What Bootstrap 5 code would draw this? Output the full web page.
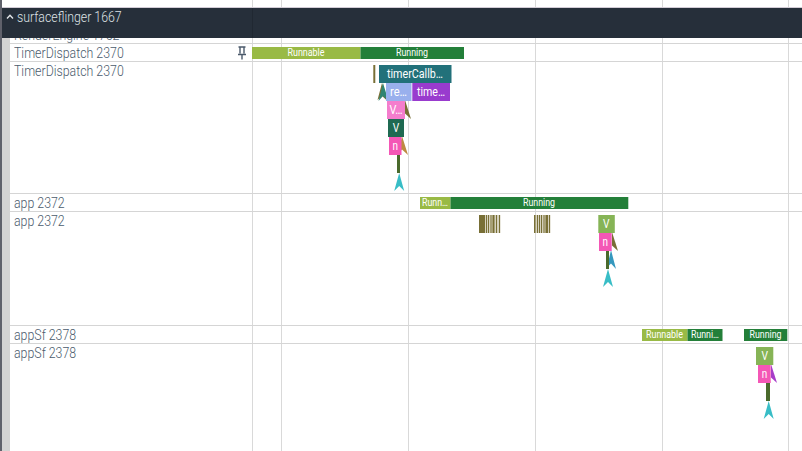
<!DOCTYPE html>
<html lang="en">
<head>
<meta charset="utf-8">
<title>Trace timeline</title>
<link href="https://cdn.jsdelivr.net/npm/bootstrap@5.3.0/dist/css/bootstrap.min.css" rel="stylesheet">
<style>
body{font-family:Roboto,"Liberation Sans",sans-serif;height:451px;background:#fff}
.edge{width:2px;background:#5f616b}
.gutter{width:8px;background:#d3d3d3}
.ruler{height:8px;border-bottom:1px solid #d2ccd6}
.grid{background-image:linear-gradient(#d9d9d9,#d9d9d9),linear-gradient(#d9d9d9,#d9d9d9),linear-gradient(#d9d9d9,#d9d9d9),linear-gradient(#d9d9d9,#d9d9d9),linear-gradient(#d9d9d9,#d9d9d9),linear-gradient(#d9d9d9,#d9d9d9);background-size:1px 100%;background-repeat:no-repeat;background-position:0 0,29px 0,156px 0,283px 0,410px 0,536px 0}
.process{height:30px;background:#262f3a;color:#dfe2e5}
.process-head{width:250px}
.process-name{font-size:15px;font-weight:300;line-height:18px;transform:scaleX(.822);transform-origin:0 50%;margin-left:2.500px}
.divider{width:1px;background:#202832}
.trk{border-bottom:1px solid #d5d5d5}
.h-clip{height:6px}.h-state{height:18px}.h-slices{height:132px}.h-short{height:114px}
.shell{width:242px;padding-left:4px;color:#4a5b6c}
.title{font-size:15px;font-weight:300;line-height:18px;transform:scaleX(.823);transform-origin:0 0}
.h-clip .title{margin-top:-12px}
.pin{margin:2px 5px 0 0}
svg{display:block;flex:none}
svg text{fill:#fff;text-anchor:middle}
.st{font-size:10px}
.sl{font-size:12px}
</style>
<script src="https://cdn.jsdelivr.net/npm/bootstrap@5.3.0/dist/js/bootstrap.bundle.min.js"></script>
</head>
<body class="d-flex overflow-hidden">
<div class="edge flex-shrink-0"></div>
<main class="d-flex flex-column flex-grow-1 overflow-hidden">
  <div class="ruler d-flex flex-shrink-0"><div class="shell"></div><div class="grid flex-grow-1 ms-2"></div></div>
  <header class="process d-flex flex-shrink-0">
    <div class="process-head d-flex align-items-start">
      <svg class="ms-1 mt-1" width="8" height="10" viewBox="0 0 8 10"><path d="M1 6.500 4 3.300 7 6.500" fill="none" stroke="#e2e5e8" stroke-width="1.400"/></svg>
      <span class="process-name text-nowrap">surfaceflinger 1667</span>
    </div>
    <div class="divider"></div>
  </header>
  <div class="d-flex flex-grow-1 overflow-hidden">
    <div class="gutter flex-shrink-0"></div>
    <div class="flex-grow-1 overflow-hidden">
      <div class="trk h-clip d-flex overflow-hidden"><div class="shell"><div class="title text-nowrap">RenderEngine 1752</div></div><div class="grid flex-grow-1"></div></div>

      <div class="trk h-state d-flex">
        <div class="shell d-flex justify-content-between"><div class="title text-nowrap">TimerDispatch 2370</div>
          <svg class="pin" width="10" height="14" viewBox="0 0 10 14"><path d="M1.500 1h7M3 1v6.500M7 1v6.500M1 8.500h8M5 8.500v5" fill="none" stroke="#4b5a6b" stroke-width="1.400"/></svg></div>
        <div class="grid flex-grow-1"><svg class="st" width="550" height="17" viewBox="252 0 550 17">
          <path fill="#99ba45" d="M252 3h108.500v12H252z"/><path fill="#237f39" d="M360.500 3H464v12H360.500z"/>
          <text x="306" y="12" textLength="37" lengthAdjust="spacingAndGlyphs">Runnable</text><text x="412" y="12" textLength="32" lengthAdjust="spacingAndGlyphs">Running</text>
        </svg></div>
      </div>

      <div class="trk h-slices d-flex">
        <div class="shell"><div class="title text-nowrap">TimerDispatch 2370</div></div>
        <div class="grid flex-grow-1"><svg class="sl" width="550" height="131" viewBox="252 0 550 131">
          <path fill="#786f36" d="m382 21 5.500 18-5.500-5-4.500 4z"/><path fill="#2f8471" d="m383 21 5.500 18-5.500-5-4.500 5z"/>
          <path fill="#786f36" d="m405 38 6 19-6-5.500z"/><path fill="#bd8a41" d="m402 74 6 19-6-5.500-4 4z"/>
          <path fill="#786f36" d="M373.300 3h2v18h-2z"/><path fill="#22717a" d="M379 3h72.500v18H379z"/>
          <path fill="#99b0ed" d="M386 21h25.500v18H386z"/><path fill="#993bce" d="M412.300 21H450v18h-37.700z"/>
          <path fill="#f47dcd" d="M387 39h18v18h-18z"/><path fill="#1f6a52" d="M388 57h16v18h-16z"/><path fill="#f457b6" d="M389 75h12.500v18H389z"/>
          <path fill="#4a6a2c" d="M397 93h3v18h-3z"/>
          <path fill="#38bdc6" d="m399.200 111 5 18-5-5-5 5z"/>
          <text x="415" y="16" textLength="56" lengthAdjust="spacingAndGlyphs">timerCallb…</text>
          <text x="398.500" y="34" textLength="17" lengthAdjust="spacingAndGlyphs">re…</text>
          <text x="431" y="34" textLength="28" lengthAdjust="spacingAndGlyphs">time…</text>
          <text x="396" y="52" textLength="13" lengthAdjust="spacingAndGlyphs">V…</text>
          <text x="396" y="70" textLength="6.500" lengthAdjust="spacingAndGlyphs">V</text><text x="395.300" y="88" textLength="5.500" lengthAdjust="spacingAndGlyphs">n</text>
        </svg></div>
      </div>

      <div class="trk h-state d-flex">
        <div class="shell"><div class="title text-nowrap">app 2372</div></div>
        <div class="grid flex-grow-1"><svg class="st" width="550" height="17" viewBox="252 0 550 17">
          <path fill="#99ba45" d="M420 3h30.500v12H420z"/><path fill="#237f39" d="M450.500 3H628.300v12H450.500z"/>
          <text x="435" y="12" textLength="26" lengthAdjust="spacingAndGlyphs">Runn…</text><text x="539" y="12" textLength="32" lengthAdjust="spacingAndGlyphs">Running</text>
        </svg></div>
      </div>

      <div class="trk h-short d-flex">
        <div class="shell"><div class="title text-nowrap">app 2372</div></div>
        <div class="grid flex-grow-1"><svg class="sl" width="550" height="113" viewBox="252 0 550 113">
          <path fill="#d5d1be" d="M479 3h21.500v18H479zM534 3h16.500v18H534z"/>
          <path fill="#786f36" d="M479 3h6v18h-6zM486 3h1v18h-1zM488 3h1v18h-1zM493 3h1v18h-1zM496 3h1v18h-1zM499 3h1v18h-1zM534 3h1.500v18H534zM537 3h1v18h-1zM539 3h1v18h-1zM541 3h1v18h-1zM545.500 3H548v18h-2.500zM549 3h1v18h-1z"/>
          <path fill="#a7a078" d="M490 3h3v18h-3zM494 3h1v18h-1zM543 3h2v18h-2z"/>
          <path fill="#786f36" d="m612 20 6 19-6-5.500z"/><path fill="#3598be" d="m611 38 5 19-5-5.500-4 4z"/>
          <path fill="#86b456" d="M598.300 3h16.500v18h-16.500z"/><path fill="#f457b6" d="M599 21h12.700v18H599z"/>
          <path fill="#4a6a2c" d="M606 39h3v18h-3z"/>
          <path fill="#38bdc6" d="m608 57 5 18-5-5-5 5z"/>
          <text x="606.300" y="16" textLength="6.500" lengthAdjust="spacingAndGlyphs">V</text><text x="605.300" y="34" textLength="5.500" lengthAdjust="spacingAndGlyphs">n</text>
        </svg></div>
      </div>

      <div class="trk h-state d-flex">
        <div class="shell"><div class="title text-nowrap">appSf 2378</div></div>
        <div class="grid flex-grow-1"><svg class="st" width="550" height="17" viewBox="252 0 550 17">
          <path fill="#99ba45" d="M642 3h45.500v12H642z"/><path fill="#237f39" d="M687.500 3h35v12h-35zM744 3h43.300v12H744z"/>
          <text x="664.500" y="12" textLength="37" lengthAdjust="spacingAndGlyphs">Runnable</text><text x="705" y="12" textLength="28" lengthAdjust="spacingAndGlyphs">Runni…</text><text x="765.500" y="12" textLength="32" lengthAdjust="spacingAndGlyphs">Running</text>
        </svg></div>
      </div>

      <div class="h-slices d-flex">
        <div class="shell"><div class="title text-nowrap">appSf 2378</div></div>
        <div class="grid flex-grow-1"><svg class="sl" width="550" height="107" viewBox="252 0 550 107">
          <path fill="#a83dc8" d="m771 20 6 19-6-5.500z"/>
          <path fill="#86b456" d="M756 3h17.300v18H756z"/><path fill="#f457b6" d="M758 21h12.700v18H758z"/>
          <path fill="#4a6a2c" d="M766 39h4v18h-4z"/>
          <path fill="#38bdc6" d="m768.700 57 5 18-5-5-5 5z"/>
          <text x="764.700" y="16" textLength="6.500" lengthAdjust="spacingAndGlyphs">V</text><text x="764.500" y="34" textLength="5.500" lengthAdjust="spacingAndGlyphs">n</text>
        </svg></div>
      </div>
    </div>
  </div>
</main>
</body>
</html>
